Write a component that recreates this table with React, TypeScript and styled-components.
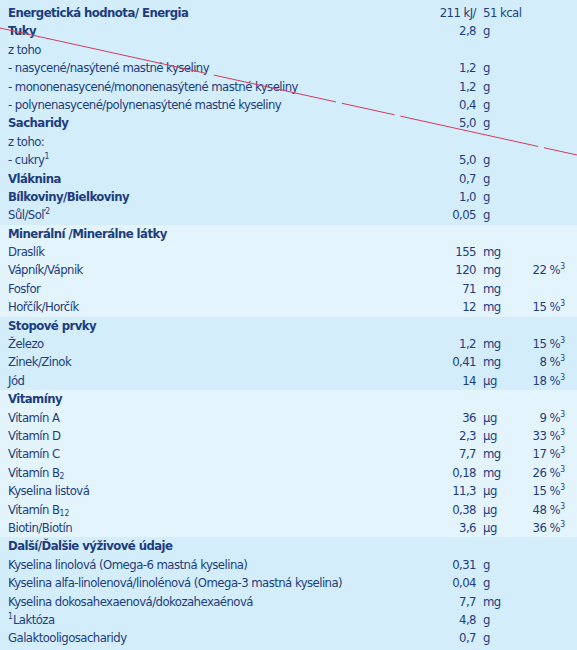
import React from 'react';
import styled, { createGlobalStyle } from 'styled-components';

const GlobalStyle = createGlobalStyle`
    html, body {
        margin: 0;
        padding: 0;
        background: #d4edfa;
    }
    body {
        font-family: 'DejaVu Sans Condensed', 'Roboto', sans-serif;
        color: #1c3d7e;
    }
`;

const Table = styled.div`
    position: relative;
    width: 577px;
    height: 650px;
    overflow: hidden;
`;

const Section = styled.div<{ $light?: boolean; $first?: boolean }>`
    background: ${(p) => (p.$light ? '#e4f4fc' : '#d4edfa')};
    padding-top: ${(p) => (p.$first ? '4px' : '0')};
`;

const Row = styled.div<{ $bold?: boolean }>`
    display: grid;
    grid-template-columns: 408px 60px 38px 51px;
    padding-left: 8px;
    height: 18.4px;
    line-height: 18.4px;
    font-size: 13px;
    letter-spacing: -0.55px;
    white-space: nowrap;

    & > span:first-child {
        font-weight: ${(p) => (p.$bold ? 700 : 400)};
    }
`;

const Label = styled.span`
    overflow: visible;
`;

const Value = styled.span`
    text-align: right;
`;

const Unit = styled.span`
    padding-left: 7px;
`;

const Pct = styled.span`
    text-align: right;
`;

const Sup = styled.sup`
    font-size: 8.5px;
    line-height: 0;
    vertical-align: 5px;
    letter-spacing: 0;
`;

const Sub = styled.sub`
    font-size: 8.5px;
    line-height: 0;
    vertical-align: -2px;
    letter-spacing: 0;
`;

const Overlay = styled.svg`
    position: absolute;
    inset: 0;
    pointer-events: none;
`;

type Item = {
    label: React.ReactNode;
    bold?: boolean;
    value?: string;
    unit?: string;
    pct?: string;
};

const pct = (n: string) => (
    <>
        {n} %<Sup>3</Sup>
    </>
);

const SECTIONS: { light?: boolean; rows: Item[] }[] = [
    {
        rows: [
            { label: 'Energetická hodnota/ Energia', bold: true, value: '211 kJ/', unit: '51 kcal' },
            { label: 'Tuky', bold: true, value: '2,8', unit: 'g' },
            { label: 'z toho' },
            { label: '- nasycené/nasýtené mastné kyseliny', value: '1,2', unit: 'g' },
            { label: '- mononenasycené/mononenasýtené mastné kyseliny', value: '1,2', unit: 'g' },
            { label: '- polynenasycené/polynenasýtené mastné kyseliny', value: '0,4', unit: 'g' },
            { label: 'Sacharidy', bold: true, value: '5,0', unit: 'g' },
            { label: 'z toho:' },
            { label: <>- cukry<Sup>1</Sup></>, value: '5,0', unit: 'g' },
            { label: 'Vláknina', bold: true, value: '0,7', unit: 'g' },
            { label: 'Bílkoviny/Bielkoviny', bold: true, value: '1,0', unit: 'g' },
            { label: <>Sůl/Soľ<Sup>2</Sup></>, value: '0,05', unit: 'g' },
        ],
    },
    {
        light: true,
        rows: [
            { label: 'Minerální /Minerálne látky', bold: true },
            { label: 'Draslík', value: '155', unit: 'mg' },
            { label: 'Vápník/Vápnik', value: '120', unit: 'mg', pct: '22' },
            { label: 'Fosfor', value: '71', unit: 'mg' },
            { label: 'Hořčík/Horčík', value: '12', unit: 'mg', pct: '15' },
        ],
    },
    {
        rows: [
            { label: 'Stopové prvky', bold: true },
            { label: 'Železo', value: '1,2', unit: 'mg', pct: '15' },
            { label: 'Zinek/Zinok', value: '0,41', unit: 'mg', pct: '8' },
            { label: 'Jód', value: '14', unit: 'µg', pct: '18' },
        ],
    },
    {
        light: true,
        rows: [
            { label: 'Vitamíny', bold: true },
            { label: 'Vitamín A', value: '36', unit: 'µg', pct: '9' },
            { label: 'Vitamín D', value: '2,3', unit: 'µg', pct: '33' },
            { label: 'Vitamín C', value: '7,7', unit: 'mg', pct: '17' },
            { label: <>Vitamín B<Sub>2</Sub></>, value: '0,18', unit: 'mg', pct: '26' },
            { label: 'Kyselina listová', value: '11,3', unit: 'µg', pct: '15' },
            { label: <>Vitamín B<Sub>12</Sub></>, value: '0,38', unit: 'µg', pct: '48' },
            { label: 'Biotin/Biotín', value: '3,6', unit: 'µg', pct: '36' },
        ],
    },
    {
        rows: [
            { label: 'Další/Ďalšie výživové údaje', bold: true },
            { label: 'Kyselina linolová (Omega-6 mastná kyselina)', value: '0,31', unit: 'g' },
            { label: 'Kyselina alfa-linolenová/linolénová (Omega-3 mastná kyselina)', value: '0,04', unit: 'g' },
            { label: 'Kyselina dokosahexaenová/dokozahexaénová', value: '7,7', unit: 'mg' },
            { label: <><Sup>1</Sup>Laktóza</>, value: '4,8', unit: 'g' },
            { label: 'Galaktooligosacharidy', value: '0,7', unit: 'g' },
        ],
    },
];

export default function App() {
    return (
        <Table>
            <GlobalStyle />
            {SECTIONS.map((section, i) => (
                <Section key={i} $light={section.light} $first={i === 0}>
                    {section.rows.map((row, j) => (
                        <Row key={j} $bold={row.bold}>
                            <Label>{row.label}</Label>
                            <Value>{row.value}</Value>
                            <Unit>{row.unit}</Unit>
                            <Pct>{row.pct ? pct(row.pct) : null}</Pct>
                        </Row>
                    ))}
                </Section>
            ))}
            <Overlay width="577" height="650" viewBox="0 0 577 650">
                <line
                    x1="0"
                    y1="28"
                    x2="577"
                    y2="155"
                    stroke="#d23a5e"
                    strokeWidth="1"
                    strokeDasharray="210 9 125 6 54 6 141 6 120"
                />
            </Overlay>
        </Table>
    );
}
